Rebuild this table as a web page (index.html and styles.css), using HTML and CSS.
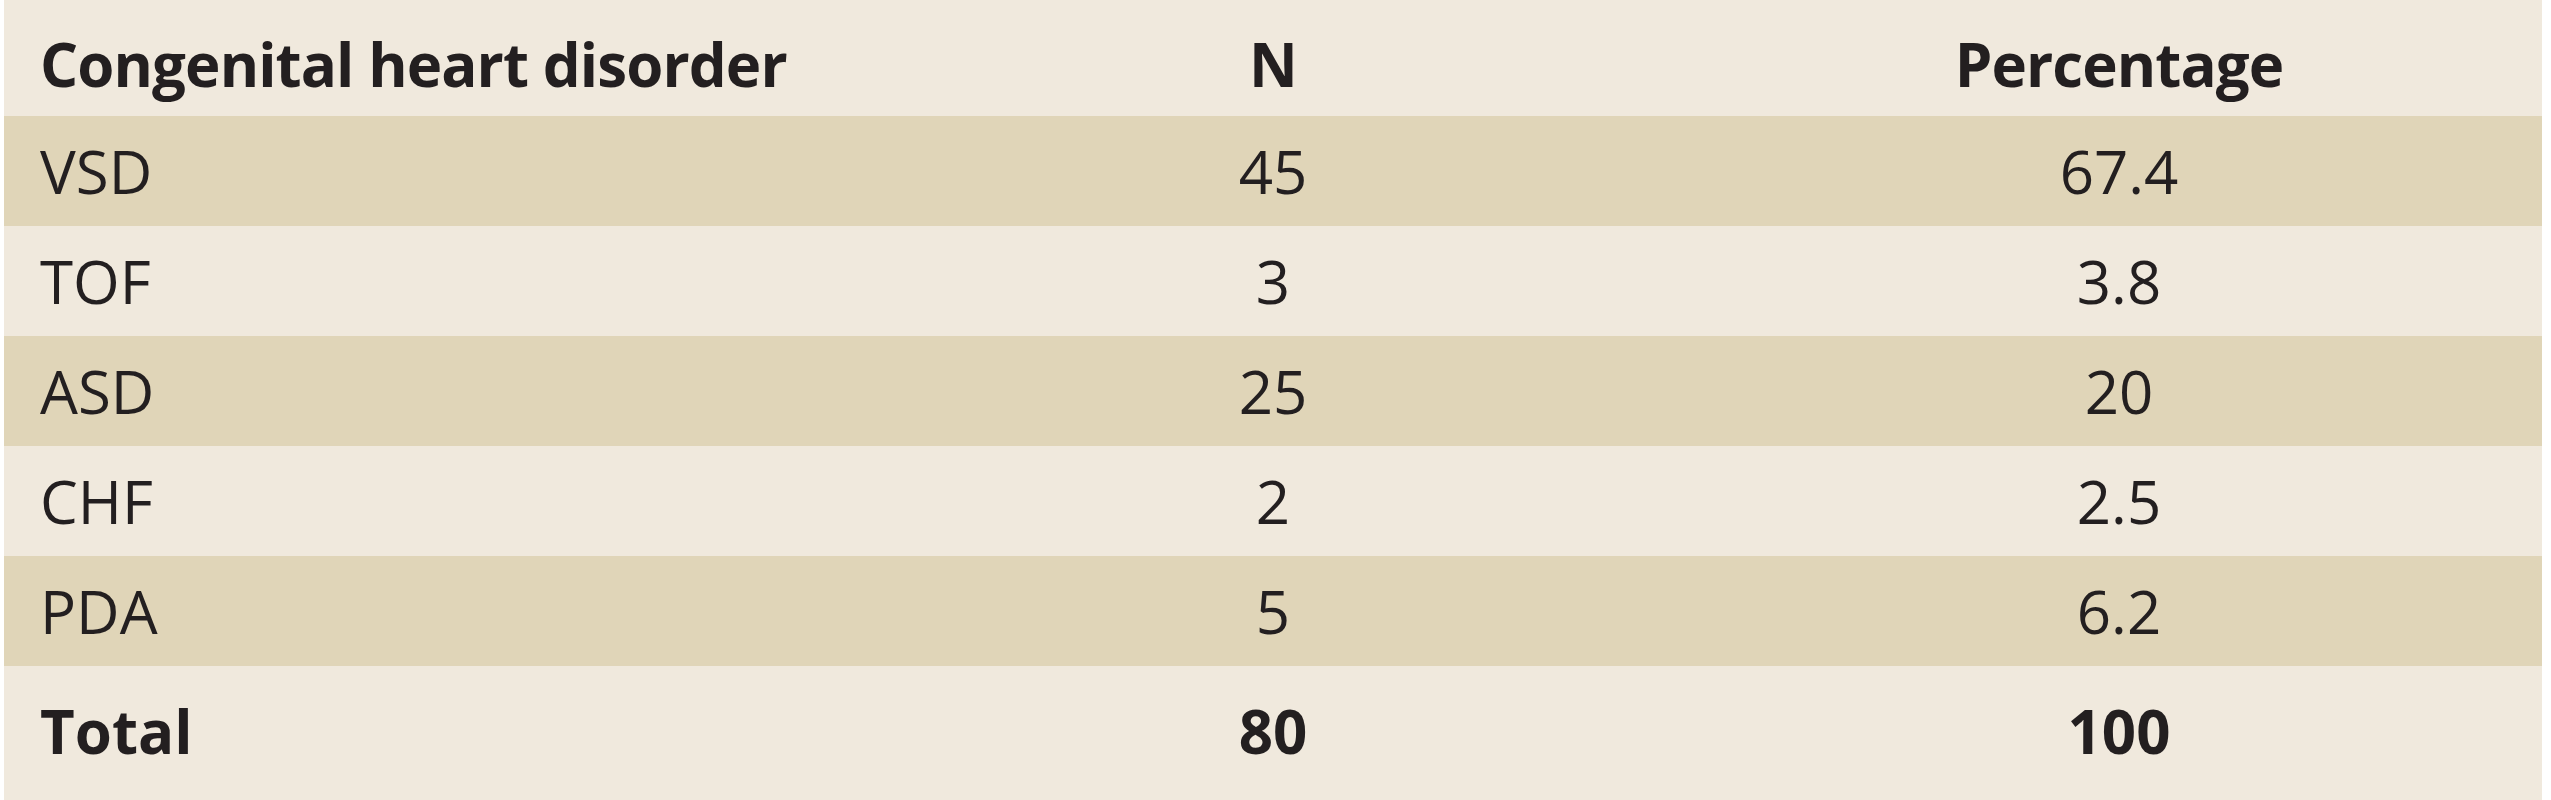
FILE: index.html
```html
<!DOCTYPE html>
<html>
<head>
<meta charset="utf-8">
<link rel="stylesheet" href="styles.css">
</head>
<body>
<table class="data">
  <thead>
    <tr class="head"><th class="c1">Congenital heart disorder</th><th>N</th><th>Percentage</th></tr>
  </thead>
  <tbody>
    <tr class="shade"><td class="c1">VSD</td><td>45</td><td>67.4</td></tr>
    <tr><td class="c1">TOF</td><td>3</td><td>3.8</td></tr>
    <tr class="shade"><td class="c1">ASD</td><td>25</td><td>20</td></tr>
    <tr><td class="c1">CHF</td><td>2</td><td>2.5</td></tr>
    <tr class="shade"><td class="c1">PDA</td><td>5</td><td>6.2</td></tr>
    <tr class="total"><td class="c1">Total</td><td>80</td><td>100</td></tr>
  </tbody>
</table>
</body>
</html>
```
FILE: styles.css
```css
html, body {
  margin: 0;
  padding: 0;
  background: #ffffff;
}
body {
  padding-left: 4px;
  font-family: "Open Sans", "Liberation Sans", sans-serif;
  color: #231f20;
}
.data {
  width: 2538px;
  border-collapse: collapse;
  table-layout: fixed;
  background: #f0e9dd;
}
.data th, .data td {
  width: 33.333%;
  text-align: center;
  padding: 0;
  font-size: 60px;
  line-height: 1;
  height: 110px;
  box-sizing: border-box;
}
.data th {
  font-weight: 700;
  height: 116px;
  padding-top: 12px;
  letter-spacing: -0.9px;
}
.data .c1 {
  text-align: left;
  padding-left: 36px;
}
.shade {
  background: #e0d5b8;
}
.total td {
  font-weight: 700;
  height: 134px;
  padding-bottom: 4px;
}
```
